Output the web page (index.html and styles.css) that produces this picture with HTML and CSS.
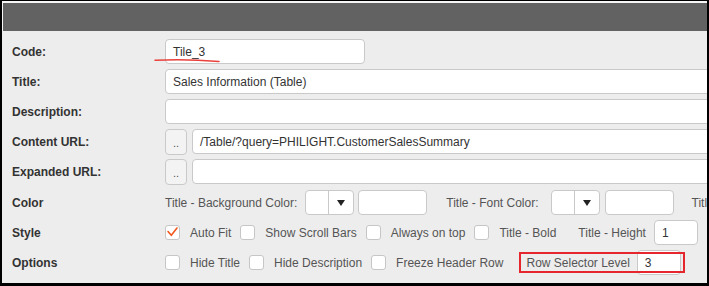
FILE: index.html
```html
<!DOCTYPE html>
<html>
<head>
<meta charset="utf-8">
<link rel="stylesheet" href="styles.css">
</head>
<body>
<div class="frame">
  <div class="header"></div>
  <div class="form">
    <div class="row">
      <div class="label">Code:</div>
      <div class="field"><div class="input w-code">Tile_3</div></div>
    </div>
    <div class="row">
      <div class="label">Title:</div>
      <div class="field"><div class="input w-long">Sales Information (Table)</div></div>
    </div>
    <div class="row">
      <div class="label">Description:</div>
      <div class="field"><div class="input w-long"></div></div>
    </div>
    <div class="row">
      <div class="label">Content URL:</div>
      <div class="field"><div class="btn">..</div><div class="input w-url">/Table/?query=PHILIGHT.CustomerSalesSummary</div></div>
    </div>
    <div class="row">
      <div class="label">Expanded URL:</div>
      <div class="field"><div class="btn">..</div><div class="input w-url"></div></div>
    </div>
    <div class="row row-color">
      <div class="label">Color</div>
      <div class="field">
        <span class="txt m-r8">Title - Background Color:</span>
        <div class="picker"><div class="swatch"></div><div class="drop"></div></div>
        <div class="input w-color m-l4"></div>
        <span class="txt m-l19 m-r12">Title - Font Color:</span>
        <div class="picker"><div class="swatch"></div><div class="drop"></div></div>
        <div class="input w-color m-l5"></div>
        <span class="txt m-l18">Title - Border Color:</span>
      </div>
    </div>
    <div class="row">
      <div class="label">Style</div>
      <div class="field">
        <div class="cb"><svg width="13" height="13" viewBox="0 0 13 13"><polyline points="2,5.5 5.3,9.3 11,2" fill="none" stroke="#f2561d" stroke-width="1.6" stroke-linecap="round" stroke-linejoin="round"/></svg></div>
        <span class="txt cl">Auto Fit</span>
        <div class="cb"></div>
        <span class="txt cl">Show Scroll Bars</span>
        <div class="cb"></div>
        <span class="txt cl">Always on top</span>
        <div class="cb"></div>
        <span class="txt">Title - Bold</span>
        <span class="txt m-l22 m-r8">Title - Height</span>
        <div class="input w-small">1</div>
      </div>
    </div>
    <div class="row">
      <div class="label">Options</div>
      <div class="field">
        <div class="cb"></div>
        <span class="txt cl">Hide Title</span>
        <div class="cb"></div>
        <span class="txt cl">Hide Description</span>
        <div class="cb"></div>
        <span class="txt">Freeze Header Row</span>
        <div class="annot">
          <span class="txt m-r7">Row Selector Level</span>
          <div class="input w-small">3</div>
        </div>
      </div>
    </div>
  </div>
  <svg class="underline" width="76" height="10" viewBox="0 0 76 10"><path d="M5 5.3 Q35 3.8 69 6.4" fill="none" stroke="#e8413c" stroke-width="1.5" stroke-linecap="round"/></svg>
</div>
</body>
</html>
```

FILE: styles.css
```css
* { box-sizing: border-box; margin: 0; padding: 0; }
body {
  margin: 0;
  background: #fff;
  font-family: "Liberation Sans", Arial, sans-serif;
  font-size: 12px;
}
.frame {
  position: relative;
  width: 709px;
  height: 286px;
  border-style: solid;
  border-color: #000;
  border-width: 1px 2px 3px 2px;
  background: #ededed;
  overflow: hidden;
}
.header {
  height: 30px;
  border-top: 2px solid #f6f6f6;
  border-left: 1px solid #f6f6f6;
  background: #626262;
}
.form {
  display: flex;
  flex-direction: column;
  gap: 5px;
  padding: 8px 0 0 10px;
}
.row {
  display: flex;
  align-items: center;
  height: 25px;
  flex-shrink: 0;
}
.row-color { margin-top: 1px; }
.label {
  width: 153px;
  flex-shrink: 0;
  font-weight: bold;
  color: #333;
}
.field {
  display: flex;
  align-items: center;
  white-space: nowrap;
  flex-shrink: 0;
}
.input {
  height: 25px;
  border: 1px solid #c9c9c9;
  border-radius: 4px;
  background: #fff;
  padding: 0 7px;
  display: flex;
  align-items: center;
  color: #333;
  flex-shrink: 0;
  white-space: nowrap;
}
.w-code { width: 200px; }
.w-long { width: 570px; }
.w-url { width: 540px; margin-left: 5px; }
.w-color { width: 69px; }
.w-small { width: 44px; }
.btn {
  width: 22px;
  height: 26px;
  border: 1px solid #c9c9c9;
  border-radius: 4px;
  background: #f3f3f3;
  color: #555;
  display: flex;
  align-items: center;
  justify-content: center;
  padding-top: 3px;
  font-size: 11px;
  flex-shrink: 0;
}
.txt { color: #555; flex-shrink: 0; }
.picker {
  display: flex;
  width: 49px;
  height: 25px;
  border: 1px solid #c9c9c9;
  border-radius: 4px;
  background: #fff;
  flex-shrink: 0;
}
.swatch {
  width: 23px;
  border-right: 1px solid #c9c9c9;
}
.drop {
  flex: 1;
  display: flex;
  align-items: center;
  justify-content: center;
}
.drop::before {
  content: "";
  border-left: 4px solid transparent;
  border-right: 4px solid transparent;
  border-top: 6px solid #222;
}
.cb {
  width: 15px;
  height: 15px;
  border: 1px solid #c6c6c6;
  border-radius: 3px;
  background: #fff;
  margin-right: 10px;
  flex-shrink: 0;
  display: flex;
  align-items: center;
  justify-content: center;
}
.cb svg { display: block; }
.cl { margin-right: 9px; }
.m-r7 { margin-right: 7px; }
.m-r8 { margin-right: 8px; }
.m-r12 { margin-right: 12px; }
.m-l4 { margin-left: 4px; }
.m-l5 { margin-left: 5px; }
.m-l18 { margin-left: 18px; }
.m-l19 { margin-left: 19px; }
.m-l22 { margin-left: 22px; }
.annot {
  position: relative;
  display: flex;
  align-items: center;
  margin-left: 23px;
  flex-shrink: 0;
}
.annot::after {
  content: "";
  position: absolute;
  left: -7px;
  right: -4px;
  top: 2px;
  bottom: 2px;
  border: 2px solid #e5262d;
  pointer-events: none;
}
.underline {
  position: absolute;
  left: 148px;
  top: 54px;
}
```
